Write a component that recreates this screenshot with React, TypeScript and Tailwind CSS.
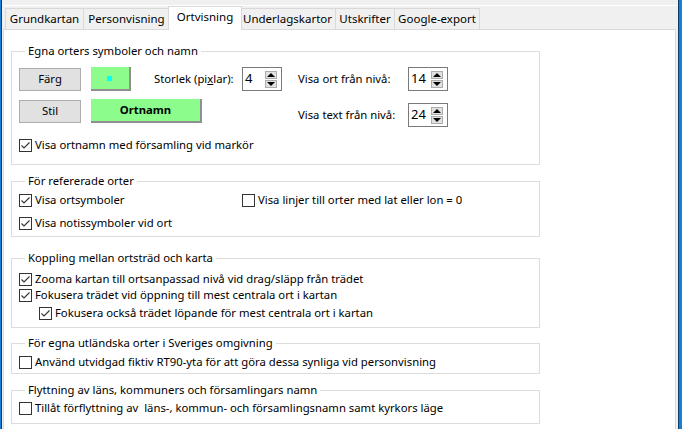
import React from 'react'

const font = { fontFamily: '"Noto Sans", "Open Sans", sans-serif' }

function Check({ checked, label, className = '' }: { checked: boolean; label: string; className?: string }) {
    return (
        <div className={`flex items-center h-[16px] ${className}`}>
            <svg width="13" height="13" viewBox="0 0 13 13" className="shrink-0">
                <rect x="0.5" y="0.5" width="12" height="12" fill="#fff" stroke="#333" />
                {checked && <path d="M2.5 6.5 L5 9 L10.5 3.5" fill="none" stroke="#333" strokeWidth="1.1" />}
            </svg>
            <span className="ml-[3px] whitespace-pre">{label}</span>
        </div>
    )
}

function Spin({ value }: { value: string }) {
    return (
        <div className="flex items-center w-[40px] h-[24px] border border-[#7a7a7a] bg-white">
            <span className="pl-[2px] flex-1 text-[13px]">{value}</span>
            <div className="flex flex-col mr-[4px] gap-px">
                <div className="w-[12px] h-[8px] bg-[#e1e1e1] border border-[#adadad] flex items-center justify-center">
                    <div className="w-0 h-0 border-l-[4px] border-r-[4px] border-b-[4px] border-l-transparent border-r-transparent border-b-black" />
                </div>
                <div className="w-[12px] h-[8px] bg-[#e1e1e1] border border-[#adadad] flex items-center justify-center">
                    <div className="w-0 h-0 border-l-[4px] border-r-[4px] border-t-[4px] border-l-transparent border-r-transparent border-t-black" />
                </div>
            </div>
        </div>
    )
}

function Group({ title, className = '', children }: { title: string; className?: string; children: React.ReactNode }) {
    return (
        <fieldset className={`ml-[7px] w-[529px] border border-[#dcdcdc] pl-[7px] ${className}`}>
            <legend className="ml-[6px] px-[3px] h-[16px] leading-[16px]">{title}</legend>
            {children}
        </fieldset>
    )
}

const tabs = ['Grundkartan', 'Personvisning', 'Ortvisning', 'Underlagskartor', 'Utskrifter', 'Google-export']
const tabW = [78, 86, 70, 96, 59, 85]

export default function App() {
    return (
        <div className="w-[682px] h-[429px] bg-[#f0f0f0] flex text-[11.3px] text-black overflow-hidden" style={font}>
            {/* left window edge */}
            <div className="w-[2px] bg-[#1a7fd4] border-r border-[#0b3f70]" />

            <div className="flex-1 flex flex-col pl-[1px]">
                <div className="h-[6px] border-b border-white" />
                {/* tabs */}
                <div className="flex items-end h-[23px] pl-[2px] relative z-10 text-[11.5px]">
                    {tabs.map((t, i) =>
                        i === 2 ? (
                            <div
                                key={t}
                                className="h-[24px] -mx-[2px] mb-[-1px] bg-white border border-b-0 border-[#d9d9d9] flex items-start justify-center pt-[1px] relative z-10"
                                style={{ width: tabW[i] + 4 }}
                            >
                                {t}
                            </div>
                        ) : (
                            <div
                                key={t}
                                className="h-[21px] bg-[#f0f0f0] border border-b-0 border-[#d9d9d9] -ml-px first:ml-0 flex items-center justify-center"
                                style={{ width: tabW[i] + 1 }}
                            >
                                {t}
                            </div>
                        )
                    )}
                </div>

                {/* panel */}
                <div className="flex-1 w-[673px] bg-white border border-b-0 border-[#d9d9d9] pt-[13px]">
                    <Group title="Egna orters symboler och namn" className="pb-[11px]">
                        <div className="flex mt-[8px] items-start">
                            <button className="w-[62px] h-[23px] mt-[1px] bg-[#e1e1e1] border border-[#adadad]">Färg</button>
                            <div className="w-[40px] h-[24px] ml-[10px] bg-[#8cfd8c] border-r-2 border-b-2 border-[#8f8f8f] flex items-center justify-center">
                                <div className="w-[5px] h-[5px] bg-[#00ffff] mr-[1px]" />
                            </div>
                            <div className="ml-[23px] w-[88px] h-[24px] flex items-center">
                                Storlek (pi<span className="underline">x</span>lar):
                            </div>
                            <Spin value="4" />
                            <div className="ml-[16px] w-[110px] h-[24px] flex items-center">Visa ort från nivå:</div>
                            <Spin value="14" />
                        </div>
                        <div className="flex mt-[8px] items-start">
                            <button className="w-[62px] h-[23px] mt-[1px] bg-[#e1e1e1] border border-[#adadad]">Stil</button>
                            <div className="w-[111px] h-[24px] ml-[10px] bg-[#8cfd8c] border-r-2 border-b-2 border-[#8f8f8f] flex items-center justify-center font-bold">
                                Ortnamn
                            </div>
                            <div className="ml-[96px] mt-[4px] w-[110px] h-[24px] flex items-center">Visa text från nivå:</div>
                            <div className="mt-[4px]">
                                <Spin value="24" />
                            </div>
                        </div>
                        <Check checked label="Visa ortnamn med församling vid markör" className="mt-[10px]" />
                    </Group>

                    <Group title="För refererade orter" className="mt-[8px] pb-[5px]">
                        <div className="flex mt-[3px]">
                            <Check checked label="Visa ortsymboler" className="w-[223px]" />
                            <Check checked={false} label="Visa linjer till orter med lat eller lon = 0" />
                        </div>
                        <Check checked label="Visa notissymboler vid ort" className="mt-[7px]" />
                    </Group>

                    <Group title="Koppling mellan ortsträd och karta" className="mt-[13px] pb-[6px]">
                        <Check checked label="Zooma kartan till ortsanpassad nivå vid drag/släpp från trädet" className="mt-[5px]" />
                        <Check checked label="Fokusera trädet vid öppning till mest centrala ort i kartan" />
                        <Check checked label="Fokusera också trädet löpande för mest centrala ort i kartan" className="mt-[2px] ml-[20px]" />
                    </Group>

                    <Group title="För egna utländska orter i Sveriges omgivning" className="mt-[7px] pb-[3px]">
                        <Check checked={false} label="Använd utvidgad fiktiv RT90-yta för att göra dessa synliga vid personvisning" className="mt-[3px]" />
                    </Group>

                    <Group title="Flyttning av läns, kommuners och församlingars namn" className="mt-[8px] pb-[7px]">
                        <Check checked={false} label="Tillåt förflyttning av  läns-, kommun- och församlingsnamn samt kyrkors läge" className="mt-[2px]" />
                    </Group>
                </div>
            </div>

            {/* right window edge */}
            <div className="w-[4px] bg-[#1a7fd4] border-l border-[#0b3f70]" />
        </div>
    )
}
